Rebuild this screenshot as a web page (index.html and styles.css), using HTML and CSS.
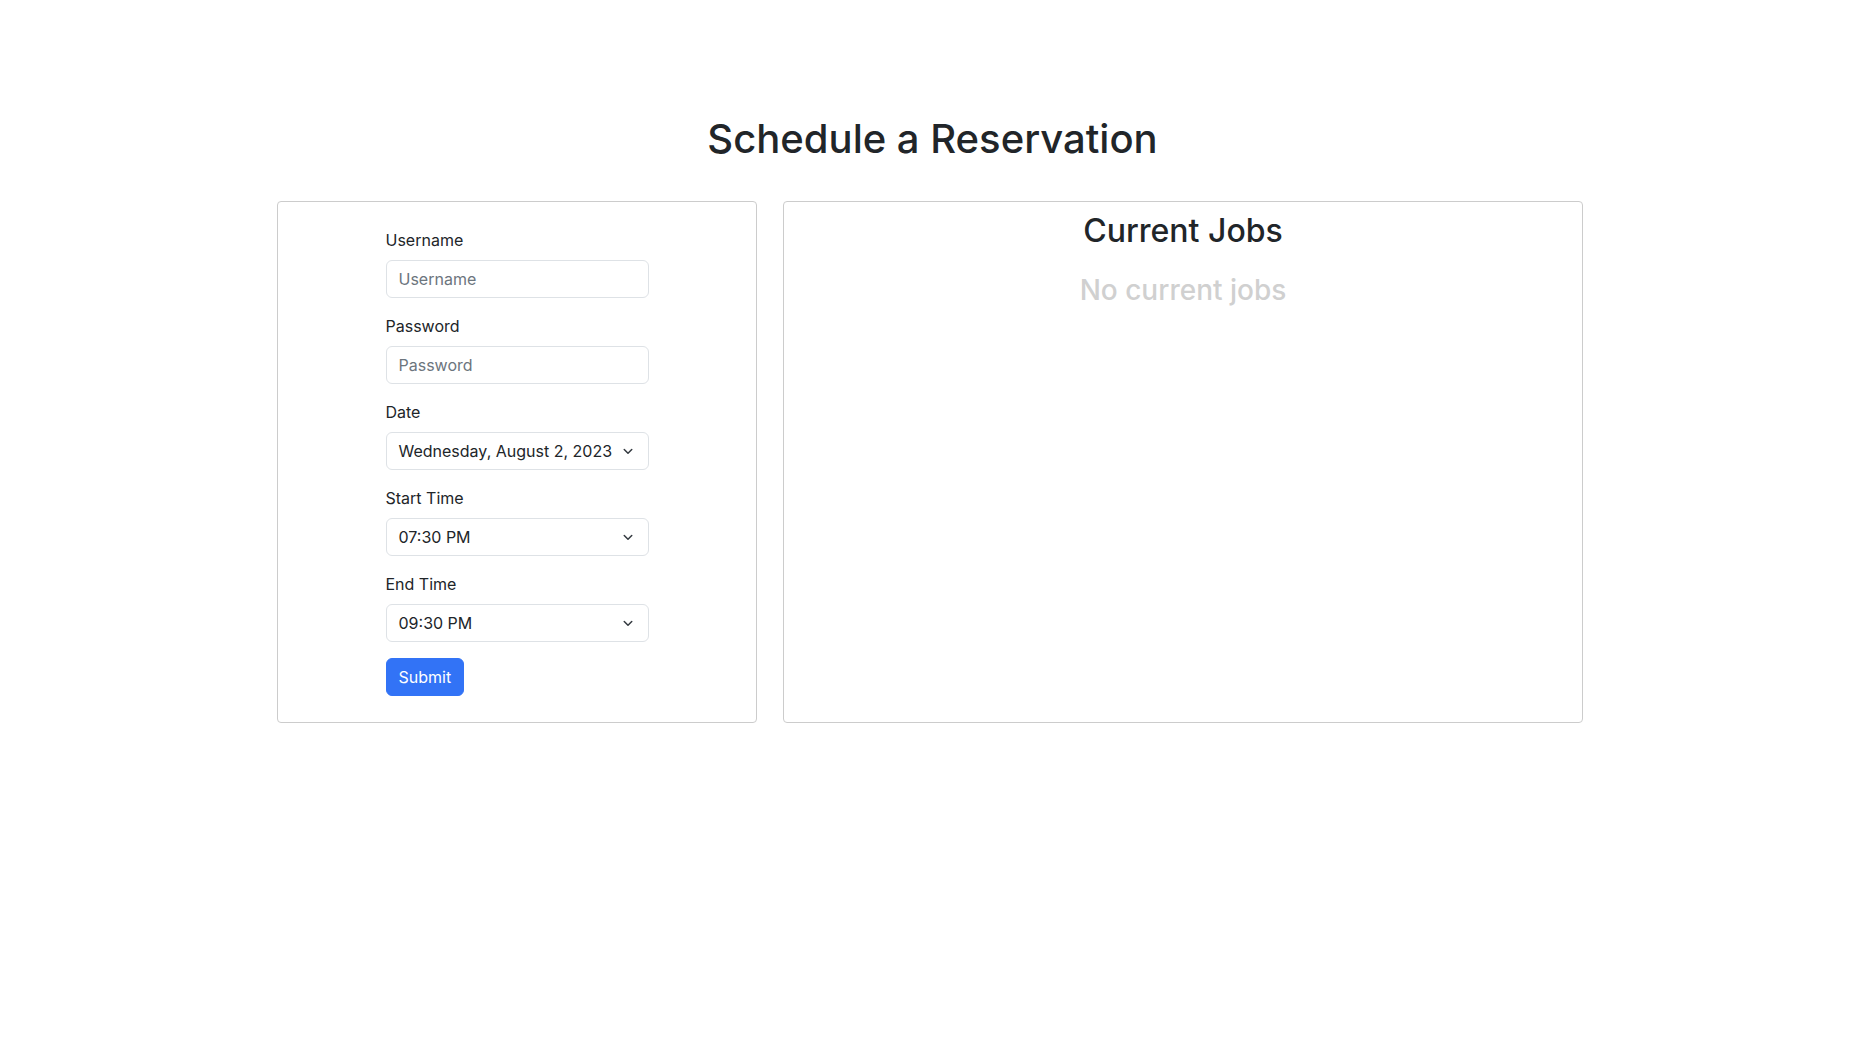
FILE: index.html
```html
<!DOCTYPE html>
<html lang="en">
<head>
<meta charset="utf-8">
<title>Schedule a Reservation</title>
<link rel="stylesheet" href="styles.css">
</head>
<body>
<h1 class="page-title">Schedule a Reservation</h1>
<div class="layout">
  <section class="card form-card">
    <form class="form">
      <div class="field">
        <label class="label" for="u">Username</label>
        <input class="control" id="u" type="text" placeholder="Username">
      </div>
      <div class="field">
        <label class="label" for="p">Password</label>
        <input class="control" id="p" type="password" placeholder="Password">
      </div>
      <div class="field">
        <label class="label" for="d">Date</label>
        <div class="control select"><span>Wednesday, August 2, 2023</span>
          <svg class="chev" width="16" height="12" viewBox="0 0 16 16"><path d="m3 6 5 5 5-5" fill="none" stroke="#343a40" stroke-width="2" stroke-linecap="round" stroke-linejoin="round"/></svg>
        </div>
      </div>
      <div class="field">
        <label class="label" for="s">Start Time</label>
        <div class="control select"><span>07:30 PM</span>
          <svg class="chev" width="16" height="12" viewBox="0 0 16 16"><path d="m3 6 5 5 5-5" fill="none" stroke="#343a40" stroke-width="2" stroke-linecap="round" stroke-linejoin="round"/></svg>
        </div>
      </div>
      <div class="field">
        <label class="label" for="e">End Time</label>
        <div class="control select"><span>09:30 PM</span>
          <svg class="chev" width="16" height="12" viewBox="0 0 16 16"><path d="m3 6 5 5 5-5" fill="none" stroke="#343a40" stroke-width="2" stroke-linecap="round" stroke-linejoin="round"/></svg>
        </div>
      </div>
      <button class="btn" type="button">Submit</button>
    </form>
  </section>
  <section class="card jobs-card">
    <h2 class="jobs-title">Current Jobs</h2>
    <h3 class="jobs-empty">No current jobs</h3>
  </section>
</div>
</body>
</html>
```
FILE: styles.css
```css
* { box-sizing: border-box; }
html, body { margin: 0; padding: 0; background: #fff; }
body {
  font-family: Inter, "Noto Sans", sans-serif;
  color: #212529;
  font-size: 16px;
  line-height: 1.5;
}
.page-title {
  margin: 115px 0 38px;
  text-align: center;
  font-size: 40px;
  font-weight: 500;
  line-height: 1.2;
}
.layout {
  display: flex;
  gap: 26px;
  width: 1311px;
  padding-right: 5px;
  margin: 0 auto;
}
.card {
  border: 1px solid #cccccc;
  border-radius: 4px;
  background: #fff;
}
.form-card {
  width: 480px;
  padding: 26px 0 26px;
}
.jobs-card {
  width: 800px;
  padding-top: 10px;
  text-align: center;
}
.form { width: 263px; margin: 0 auto; }
.field { margin-bottom: 16px; }
.label { display: block; margin-bottom: 8px; }
.control {
  display: block;
  width: 100%;
  height: 38px;
  padding: 6px 12px;
  font: inherit;
  color: #212529;
  border: 1px solid #dee2e6;
  border-radius: 6px;
  background: #fff;
}
.control::placeholder { color: #6c757d; }
.select {
  display: flex;
  align-items: center;
  justify-content: space-between;
  padding-right: 12px;
}
.chev { flex: none; }
.btn {
  font: inherit;
  color: #fff;
  background: #3273f6;
  border: 1px solid #3273f6;
  border-radius: 6px;
  padding: 6px 12px;
  height: 38px;
}
.jobs-title {
  margin: 0;
  font-size: 32px;
  font-weight: 500;
  line-height: 1.2;
}
.jobs-empty {
  margin: 24px 0 0;
  font-size: 28px;
  font-weight: 500;
  line-height: 1.2;
  color: #d0d0d0;
}
```
